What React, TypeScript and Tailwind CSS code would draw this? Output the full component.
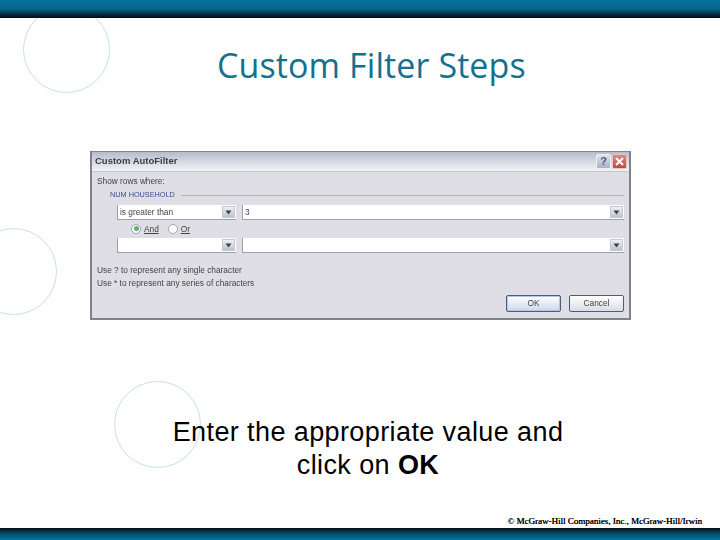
const sans = "font-['Liberation_Sans',sans-serif]";

function ComboArrow() {
  return (
    <div className="w-[13px] my-px mr-px flex items-center justify-center bg-gradient-to-b from-[#eef0f4] to-[#bcc3cf] border border-[#c3cad6]">
      <svg width="7" height="5" viewBox="0 0 7 5"><path d="M0.5 0.5h6L3.5 4.5z" fill="#39414f" /></svg>
    </div>
  );
}

function Field({ value, className }: { value?: string; className: string }) {
  return (
    <div className={`h-[15px] flex justify-between bg-white border-b border-l border-[#9aa3ad] ${className}`}>
      <span className="pl-[2px] text-[8.3px] leading-[14px] text-[#444] blur-[0.35px]">{value}</span>
      <ComboArrow />
    </div>
  );
}

function Radio({ label, checked }: { label: string; checked?: boolean }) {
  return (
    <div className="flex items-center gap-[3px]">
      <div className="w-[10px] h-[10px] rounded-full border border-[#9aa6ae] bg-white flex items-center justify-center">
        {checked && <div className="w-[5px] h-[5px] rounded-full bg-[#5cae6a]" />}
      </div>
      <span className="text-[8.3px] leading-[10px] text-[#444] underline blur-[0.35px]">{label}</span>
    </div>
  );
}

function Dialog() {
  return (
    <div className={`w-[541px] h-[169px] ml-[90px] flex flex-col bg-[#dedee4] border-2 border-t border-[#80828a] ${sans}`}>
      <div className="h-[20px] shrink-0 flex items-center justify-between pl-[3px] pr-[2px] bg-gradient-to-b from-[#b6bbcb] via-[#d6d9e2] to-[#f2f3f6] border-b border-[#c4c6cd]">
        <span className="text-[9.5px] font-bold text-[#3c3c44] blur-[0.3px]">Custom AutoFilter</span>
        <div className="flex gap-[1px]">
          <div className="w-[15px] h-[15px] rounded-[2px] bg-gradient-to-b from-[#dfe3ee] to-[#a8b0c8] border border-[#eef0f6] flex items-center justify-center text-[11px] font-bold text-[#555c70]">?</div>
          <div className="w-[15px] h-[15px] rounded-[2px] bg-gradient-to-b from-[#d98a80] to-[#bd4a40] border border-[#e9c6c0] flex items-center justify-center">
            <svg width="11" height="11" viewBox="0 0 11 11"><path d="M2 2l7 7M9 2l-7 7" stroke="#fff" strokeWidth="2" /></svg>
          </div>
        </div>
      </div>
      <div className="flex-1 flex flex-col pl-[5px] pr-[5px] text-[#444]">
        <div className="mt-[4px] text-[8.3px] leading-[10px] blur-[0.35px]">Show rows where:</div>
        <div className="mt-[4px] ml-[13px] flex items-center gap-[6px]">
          <span className="text-[7.3px] leading-[10px] text-[#31509a] blur-[0.3px]">NUM HOUSEHOLD</span>
          <div className="flex-1 h-px bg-[#b2b5bb]" />
        </div>
        <div className="mt-[5px] ml-[20px] flex gap-[6px]">
          <Field value="is greater than" className="w-[119px]" />
          <Field value="3" className="flex-1" />
        </div>
        <div className="mt-[2px] ml-[34px] flex gap-[9px] h-[13px] items-center">
          <Radio label="And" checked />
          <Radio label="Or" />
        </div>
        <div className="mt-[3px] ml-[20px] flex gap-[6px]">
          <Field className="w-[119px]" />
          <Field className="flex-1" />
        </div>
        <div className="mt-[11px] text-[8.3px] leading-[13px] blur-[0.35px]">
          <div>Use ? to represent any single character</div>
          <div>Use * to represent any series of characters</div>
        </div>
        <div className="mt-[5px] flex justify-end gap-[8px]">
          <div className="w-[55px] h-[17px] rounded-[2px] border border-[#4a5f80] bg-gradient-to-b from-white to-[#cdd7ea] shadow-[inset_0_0_0_1px_#b4c6e6] flex items-center justify-center text-[8.3px] text-[#444] blur-[0.35px]">OK</div>
          <div className="w-[55px] h-[17px] rounded-[2px] border border-[#4a5f80] bg-gradient-to-b from-white to-[#dcdde3] flex items-center justify-center text-[8.3px] text-[#444] blur-[0.35px]">Cancel</div>
        </div>
      </div>
    </div>
  );
}

export default function App() {
  const circles = ["left-[23px] top-[6px]", "left-[-30px] top-[228px]", "left-[114px] top-[381px]"];
  return (
    <div className="relative w-[720px] h-[540px] overflow-hidden bg-white flex flex-col">
      {circles.map((c, i) => (
        <div key={i} className={`absolute ${c} w-[87px] h-[87px] rounded-full border border-[#c9e0e4]`} />
      ))}
      <div className="relative h-[18px] shrink-0 bg-gradient-to-b from-[#05739c] via-[#04678c] to-[#020c12]" />
      <h1 className="relative mt-[24px] ml-[217px] text-[34px] leading-[46px] tracking-[0.1px] text-[#14708f] font-['Open_Sans',sans-serif]">Custom Filter Steps</h1>
      <div className="relative mt-[63px]"><Dialog /></div>
      <div className={`relative mt-[96px] ml-[16px] text-center text-[27px] leading-[33px] text-black tracking-[0.4px] ${sans}`}>
        <div>Enter the appropriate value and</div>
        <div>click on <b>OK</b></div>
      </div>
      <div className="relative mt-[33px] pr-[18px] text-right text-[9px] leading-[12px] text-black [text-shadow:0.2px_0_0_#000] font-['Liberation_Serif',serif]">© McGraw-Hill Companies, Inc., McGraw-Hill/Irwin</div>
      <div className="relative mt-auto h-[12px] shrink-0 bg-gradient-to-b from-[#021018] via-[#04506e] to-[#05739c]" />
    </div>
  );
}
